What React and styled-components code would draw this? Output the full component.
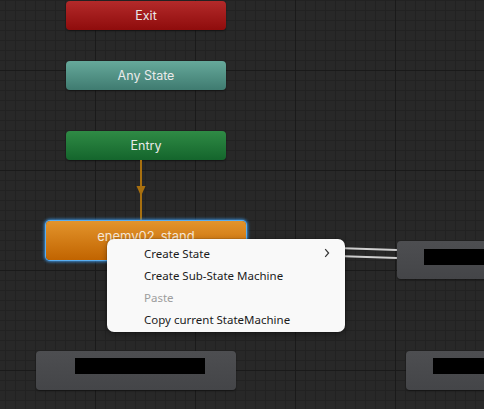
import styled, { createGlobalStyle, css } from 'styled-components';

const GlobalStyle = createGlobalStyle`
  html, body {
    margin: 0;
    padding: 0;
    background: #282828;
  }
`;

const nodeColors = {
  exit: ['#b32a2a', '#8f0c0c'],
  any: ['#66a99b', '#3f7b70'],
  entry: ['#2f8b45', '#14652c'],
  state: ['#e3942c', '#c16400'],
  plain: ['#4d4e51', '#444548'],
};

export default function App() {
  return (
    <>
      <GlobalStyle />
      <Canvas>
        <Node $kind="exit" $x={66} $y={1} $w={160} $h={29}>Exit</Node>
        <Node $kind="any" $x={66} $y={61} $w={160} $h={29}>Any State</Node>
        <Node $kind="entry" $x={66} $y={131} $w={160} $h={29}>Entry</Node>

        <Wires width="484" height="409" viewBox="0 0 484 409">
          <line x1="141" y1="160" x2="141" y2="221" stroke="#a8700f" strokeWidth="2" />
          <polygon points="136.5,186 145.5,186 141,196" fill="#a8700f" />
          <line x1="246" y1="245" x2="397" y2="250" stroke="#cfcfcf" strokeWidth="2" />
          <line x1="246" y1="253" x2="397" y2="258" stroke="#cfcfcf" strokeWidth="2" />
        </Wires>

        <Node $kind="state" $selected $x={46} $y={221} $w={200} $h={39} $pad={8}>
          enemy02_stand
        </Node>

        <Node $kind="plain" $x={397} $y={241} $w={120} $h={38} $left={27} $pad={8}>
          <Redacted $w={100} />
        </Node>
        <Node $kind="plain" $x={36} $y={351} $w={200} $h={39} $left={39} $pad={7}>
          <Redacted $w={130} />
        </Node>
        <Node $kind="plain" $x={406} $y={351} $w={120} $h={39} $left={27} $pad={7}>
          <Redacted $w={100} />
        </Node>

        <Menu>
          <MenuItem>
            Create State
            <Chevron viewBox="0 0 6 10" width="6" height="10">
              <path d="M1.2 1.2 L4.6 5 L1.2 8.8" fill="none" stroke="#333" strokeWidth="1.2" />
            </Chevron>
          </MenuItem>
          <MenuItem>Create Sub-State Machine</MenuItem>
          <MenuItem $disabled>Paste</MenuItem>
          <MenuItem>Copy current StateMachine</MenuItem>
        </Menu>
      </Canvas>
    </>
  );
}

const Canvas = styled.div`
  position: relative;
  width: 484px;
  height: 409px;
  overflow: hidden;
  background-color: #282828;
  background-image:
    linear-gradient(to right, #1a1a1a 1px, transparent 1px),
    linear-gradient(to bottom, #1a1a1a 1px, transparent 1px),
    linear-gradient(to right, #222222 1px, transparent 1px),
    linear-gradient(to bottom, #222222 1px, transparent 1px);
  background-size: 100px 100px, 100px 100px, 10px 10px, 10px 10px;
  background-position: 95px 70px, 95px 70px, 5px 0, 5px 0;
  font-family: Inter, "Noto Sans", sans-serif;
`;

const Wires = styled.svg`
  position: absolute;
  left: 0;
  top: 0;
`;

const Node = styled.div`
  position: absolute;
  left: ${(p) => p.$x}px;
  top: ${(p) => p.$y}px;
  width: ${(p) => p.$w}px;
  height: ${(p) => p.$h}px;
  box-sizing: border-box;
  display: flex;
  align-items: flex-start;
  justify-content: ${(p) => (p.$left != null ? 'flex-start' : 'center')};
  padding-top: ${(p) => (p.$pad != null ? p.$pad : 7)}px;
  padding-left: ${(p) => p.$left || 0}px;
  border-radius: 4px;
  background: linear-gradient(
    to bottom,
    ${(p) => nodeColors[p.$kind][0]},
    ${(p) => nodeColors[p.$kind][1]}
  );
  box-shadow: 0 1px 2px rgba(0, 0, 0, 0.45);
  color: #eaeaea;
  font-size: 12.5px;
  line-height: 15px;
  ${(p) =>
    p.$selected &&
    css`
      box-shadow: 0 0 0 1px #5aaef0, 0 0 3px 2px rgba(60, 150, 230, 0.85);
      color: #f4e6d6;
      font-size: 13px;
    `}
`;

const Redacted = styled.div`
  width: ${(p) => p.$w}px;
  height: 16px;
  background: #000;
`;

const Menu = styled.ul`
  position: absolute;
  left: 107px;
  top: 239px;
  width: 238px;
  height: 93px;
  box-sizing: border-box;
  margin: 0;
  padding: 3px 0 0;
  list-style: none;
  background: #f9f9f9;
  border-radius: 7px;
  box-shadow: 0 2px 6px rgba(0, 0, 0, 0.35), 0 0 0 1px rgba(0, 0, 0, 0.08);
  font-family: "Noto Sans", "Open Sans", sans-serif;
  font-size: 11.5px;
`;

const MenuItem = styled.li`
  position: relative;
  height: 22px;
  display: flex;
  align-items: center;
  padding-left: 37px;
  color: ${(p) => (p.$disabled ? '#9d9d9d' : '#1b1b1b')};
`;

const Chevron = styled.svg`
  position: absolute;
  right: 15px;
  top: 6px;
`;
